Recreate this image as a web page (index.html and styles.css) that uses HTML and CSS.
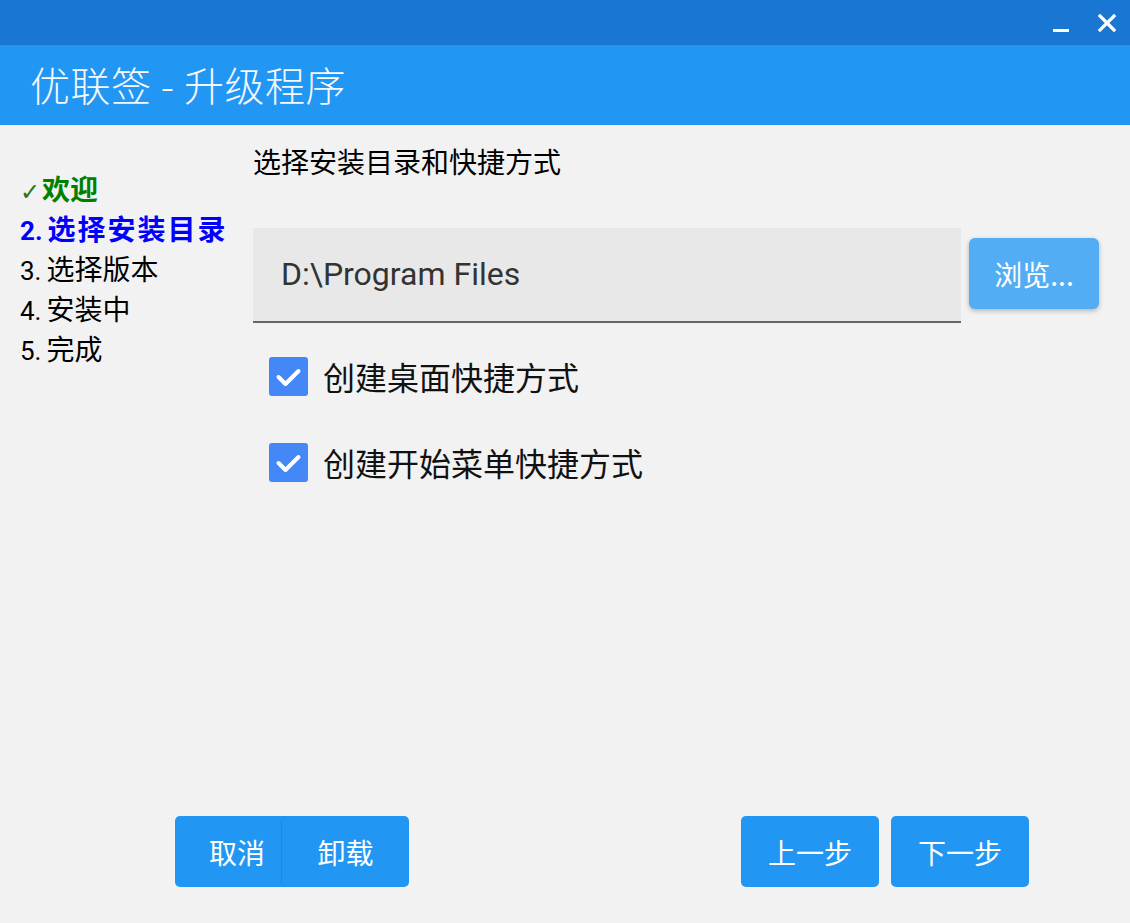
FILE: index.html
```html
<!DOCTYPE html>
<html lang="zh-CN">
<head>
<meta charset="utf-8">
<title>优联签 - 升级程序</title>
<link rel="stylesheet" href="styles.css">
</head>
<body>
<div class="app">
  <div class="topbar">
    <button class="win-btn min" aria-label="最小化"><span class="min-bar"></span></button>
    <button class="win-btn close" aria-label="关闭">
      <svg width="20" height="20" viewBox="0 0 20 20"><path d="M3 3 L17 17 M17 3 L3 17" stroke="#fff" stroke-width="3.2" stroke-linecap="square"/></svg>
    </button>
  </div>
  <div class="header">优联签 - 升级程序</div>
  <div class="main">
    <ul class="steps">
      <li class="step done"><span class="tick">✓</span>欢迎</li>
      <li class="step active"><span class="num">2.</span>选择安装目录</li>
      <li class="step"><span class="num">3.</span>选择版本</li>
      <li class="step"><span class="num">4.</span>安装中</li>
      <li class="step"><span class="num">5.</span>完成</li>
    </ul>
    <div class="content">
      <div class="heading">选择安装目录和快捷方式</div>
      <div class="path-row">
        <div class="path-input">D:\Program Files</div>
        <button class="browse">浏览...</button>
      </div>
      <label class="check-row">
        <span class="checkbox"><svg width="39" height="39" viewBox="0 0 39 39"><path d="M9.5 20 L16.5 27 L29.5 14" fill="none" stroke="#fff" stroke-width="4" stroke-linecap="round" stroke-linejoin="round"/></svg></span>
        <span class="check-label">创建桌面快捷方式</span>
      </label>
      <label class="check-row">
        <span class="checkbox"><svg width="39" height="39" viewBox="0 0 39 39"><path d="M9.5 20 L16.5 27 L29.5 14" fill="none" stroke="#fff" stroke-width="4" stroke-linecap="round" stroke-linejoin="round"/></svg></span>
        <span class="check-label">创建开始菜单快捷方式</span>
      </label>
    </div>
  </div>
  <div class="footer">
    <div class="btn-group">
      <button class="btn cancel">取消</button>
      <button class="btn uninstall">卸载</button>
    </div>
    <div class="btn-group right">
      <button class="btn nav">上一步</button>
      <button class="btn nav">下一步</button>
    </div>
  </div>
</div>
</body>
</html>
```
FILE: styles.css
```css
* { box-sizing: border-box; }
html, body { margin: 0; padding: 0; }
body {
  background: #f2f2f2;
  font-family: "Noto Sans CJK SC", "Noto Sans", sans-serif;
  color: #000;
}
.app {
  width: 1130px;
  height: 923px;
  display: flex;
  flex-direction: column;
  background: #f2f2f2;
}
.topbar {
  height: 45px;
  background: #1976d2;
  display: flex;
  justify-content: flex-end;
  align-items: center;
  padding-right: 11px;
  gap: 22px;
}
.win-btn {
  border: 0;
  background: transparent;
  padding: 0;
  width: 24px;
  height: 24px;
  display: flex;
  align-items: center;
  justify-content: center;
}
.win-btn.min { align-items: flex-end; padding-bottom: 3px; }
.min-bar {
  display: block;
  width: 16px;
  height: 3px;
  background: #fff;
}
.header {
  height: 80px;
  background: #2196f3;
  color: #f4f8ff;
  font-family: "Noto Sans CJK SC", sans-serif;
  font-weight: 300;
  font-size: 40px;
  letter-spacing: 0.5px;
  line-height: 78px;
  padding-left: 30px;
}
.main {
  flex: 1;
  display: flex;
}
.steps {
  list-style: none;
  margin: 0;
  padding: 43px 0 0 20px;
  width: 253px;
}
.step {
  height: 40px;
  line-height: 40px;
  font-size: 28px;
  white-space: nowrap;
  color: #000;
}
.step .num {
  font-family: "Roboto", "Liberation Sans", sans-serif;
  font-size: 26px;
  margin-right: 5px;
  letter-spacing: 0;
}
.step.done { color: #008000; font-weight: 700; }
.step.done .tick {
  font-family: "DejaVu Sans", sans-serif;
  font-size: 24px;
  font-weight: 400;
  margin-right: 2px;
  color: #1a7a1a;
}
.step.active { color: #0000ff; font-weight: 700; letter-spacing: 2px; }
.step.active .num { font-weight: 700; }
.content {
  flex: 1;
  padding: 16px 31px 0 0;
}
.heading {
  font-size: 28px;
  line-height: 40px;
  height: 40px;
  margin-bottom: 47px;
}
.path-row {
  display: flex;
  align-items: flex-start;
  gap: 8px;
}
.path-input {
  width: 708px;
  height: 95px;
  background: #e8e8e8;
  border-bottom: 2px solid #666;
  font-family: "Roboto", "Liberation Sans", sans-serif;
  font-size: 32px;
  color: #333;
  line-height: 93px;
  padding-left: 28px;
}
.browse {
  margin-top: 10px;
  width: 130px;
  height: 71px;
  border: 0;
  border-radius: 6px;
  background: #53adf5;
  color: #fff;
  font-family: "Noto Sans CJK SC", sans-serif;
  font-size: 28px;
  box-shadow: 0 2px 5px rgba(0,0,0,0.25);
  padding: 0;
}
.check-row {
  display: flex;
  align-items: center;
  gap: 15px;
  margin-left: 16px;
  height: 40px;
}
.check-row:first-of-type { margin-top: 33px; }
.check-row + .check-row { margin-top: 46px; }
.checkbox {
  width: 39px;
  height: 39px;
  background: #4488f8;
  border-radius: 3px;
  display: flex;
}
.check-label {
  font-size: 32px;
  color: #111;
}
.footer {
  height: 107px;
  display: flex;
  justify-content: space-between;
  padding: 0 101px 0 175px;
}
.btn-group { display: flex; }
.btn-group.right { gap: 12px; }
.btn {
  height: 71px;
  border: 0;
  border-radius: 5px;
  background: #2196f3;
  color: #fff;
  font-family: "Noto Sans CJK SC", sans-serif;
  font-size: 28px;
  padding: 0;
}
.btn.cancel { width: 124px; }
.btn.uninstall {
  width: 127px;
  margin-left: -17px;
  box-shadow: -1px 0 0 rgba(0,0,0,0.08);
}
.btn.nav { width: 138px; }
```
